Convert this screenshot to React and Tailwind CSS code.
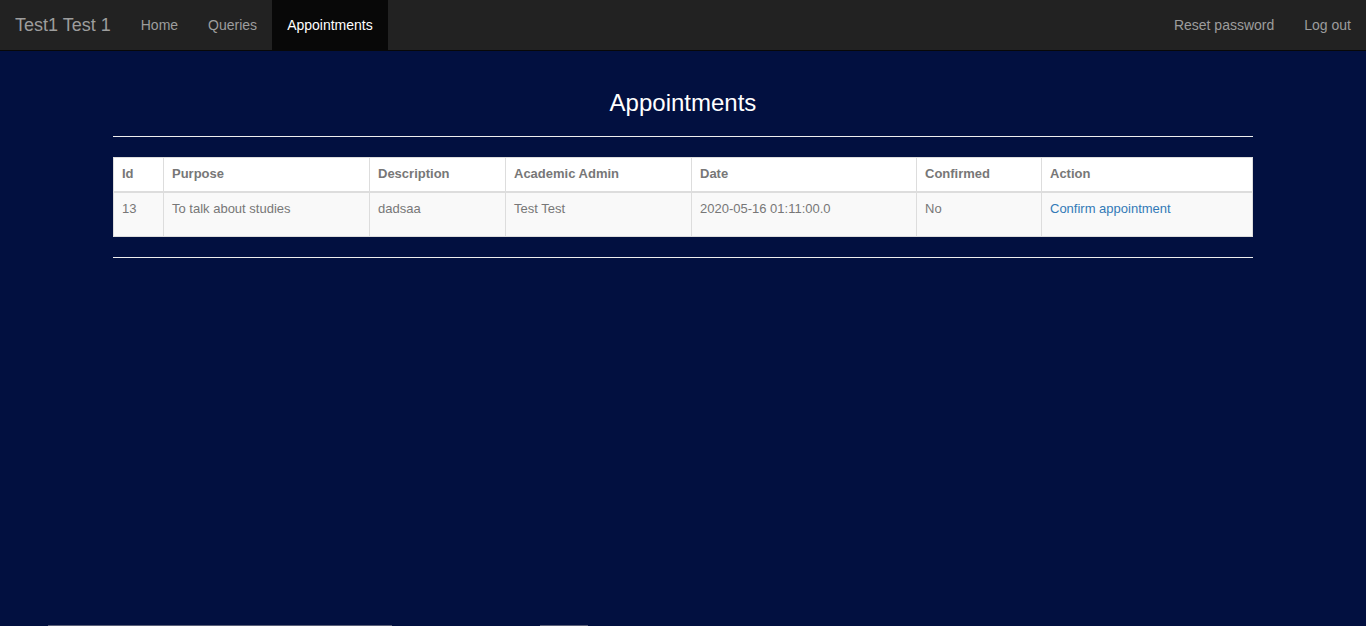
import React from "react";

const columns = [
  { label: "Id", w: "w-[50px]" },
  { label: "Purpose", w: "w-[206px]" },
  { label: "Description", w: "w-[136px]" },
  { label: "Academic Admin", w: "w-[186px]" },
  { label: "Date", w: "w-[225px]" },
  { label: "Confirmed", w: "w-[125px]" },
  { label: "Action", w: "" },
];

const appointments = [
  {
    id: 13,
    purpose: "To talk about studies",
    description: "dadsaa",
    admin: "Test Test",
    date: "2020-05-16 01:11:00.0",
    confirmed: "No",
  },
];

const cell = "px-[8px] pt-[6px] pb-[17px] leading-[20px] border border-[#dddddd] align-top";

const App = () => {
  return (
    <div className="min-h-[626px] bg-[#021040] flex flex-col font-['Liberation_Sans',Arial,sans-serif] text-[14px]">
      <nav className="h-[51px] bg-[#222222] border-b border-[#080808] flex justify-between">
        <div className="flex">
          <a className="px-[15px] leading-[50px] text-[18px] text-[#9d9d9d]">Test1 Test 1</a>
          <a className="px-[15px] leading-[50px] text-[#9d9d9d]">Home</a>
          <a className="px-[15px] leading-[50px] text-[#9d9d9d]">Queries</a>
          <a className="px-[15px] leading-[50px] text-white bg-[#080808]">Appointments</a>
        </div>
        <div className="flex">
          <a className="px-[15px] leading-[50px] text-[#9d9d9d]">Reset password</a>
          <a className="px-[15px] leading-[50px] text-[#9d9d9d]">Log out</a>
        </div>
      </nav>

      <main className="w-[1140px] mx-auto flex-1">
        <h3 className="mt-[39px] text-center text-white text-[24px] leading-[26px]">Appointments</h3>
        <hr className="mt-[20px] mb-[20px] border-t border-[#eeeeee]" />
        <table className="w-full bg-white border border-[#dddddd] border-collapse text-[#777777] text-[13px] table-fixed">
          <thead>
            <tr>
              {columns.map((c) => (
                <th
                  key={c.label}
                  className={`${c.w} text-left font-bold px-[8px] pt-[6px] pb-[7px] leading-[20px] border border-[#dddddd] border-b-2`}
                >
                  {c.label}
                </th>
              ))}
            </tr>
          </thead>
          <tbody>
            {appointments.map((a) => (
              <tr key={a.id} className="bg-[#f9f9f9]">
                <td className={cell}>{a.id}</td>
                <td className={cell}>{a.purpose}</td>
                <td className={cell}>{a.description}</td>
                <td className={cell}>{a.admin}</td>
                <td className={cell}>{a.date}</td>
                <td className={cell}>{a.confirmed}</td>
                <td className={cell}>
                  <a className="text-[#337ab7]">Confirm appointment</a>
                </td>
              </tr>
            ))}
          </tbody>
        </table>
        <hr className="mt-[20px] border-t border-[#eeeeee]" />
      </main>

      <div className="h-px flex">
        <div className="w-[48px]" />
        <div className="w-[344px] bg-[#5a5f78]" />
        <div className="w-[148px]" />
        <div className="w-[48px] bg-[#5a5f78]" />
      </div>
    </div>
  );
};

export default App;
